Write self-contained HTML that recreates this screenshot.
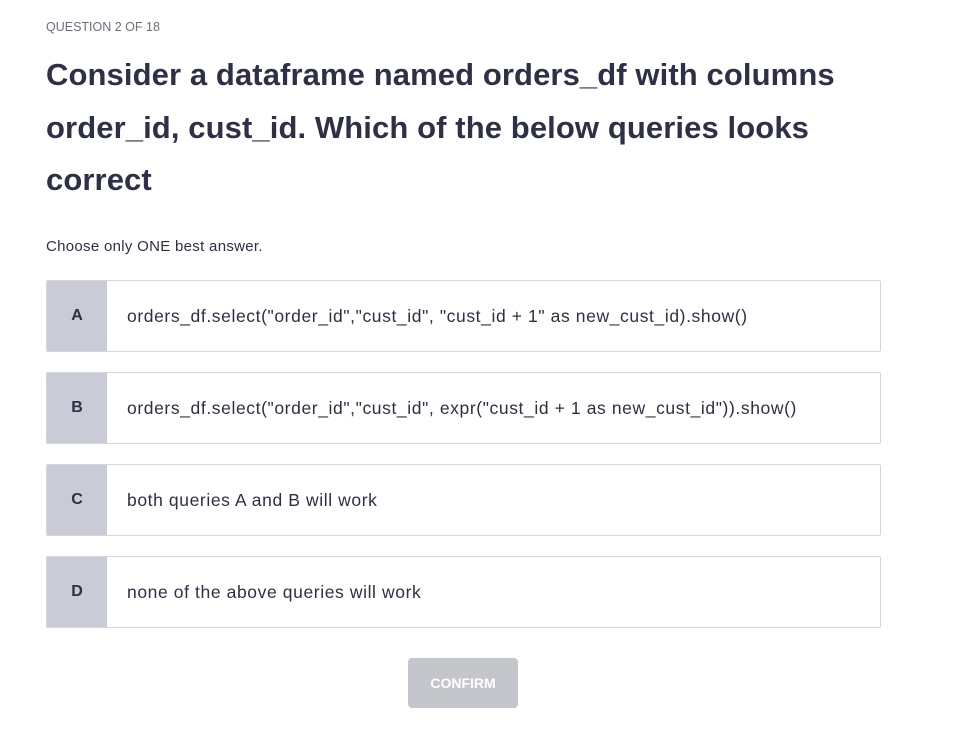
<!DOCTYPE html>
<html><head><meta charset="utf-8"><style>
body{margin:0;background:#fff;font-family:"Liberation Sans",sans-serif;color:#2d2f45;width:978px;height:755px;overflow:hidden;position:relative}
.q{position:absolute;left:46px;top:20px;font-size:12.5px;color:#6a6f7e;letter-spacing:0}
h1{position:absolute;left:46px;top:49px;margin:0;font-size:31px;line-height:52.5px;font-weight:bold;color:#2e3048;width:900px;letter-spacing:0.1px;white-space:nowrap}
.c{position:absolute;left:46px;top:238px;font-size:15px;color:#2d2f45;letter-spacing:0.3px}
.o{position:absolute;left:46px;width:833px;height:70px;border:1px solid #d4d5dc;border-radius:2px;background:#fff;display:flex;align-items:center}
.o .l{width:60px;height:70px;background:#c9cbd6;display:flex;align-items:center;justify-content:center;font-weight:bold;font-size:16px;color:#2d2f45}
.o .t{padding-left:20px;font-size:17.5px;letter-spacing:0.6px;color:#2d2f45}
.b{position:absolute;left:408px;top:658px;width:110px;height:50px;border-radius:4px;background:#c5c6cc;color:#fff;font-weight:bold;font-size:14px;display:flex;align-items:center;justify-content:center}
</style></head><body>
<div class="q">QUESTION 2 OF 18</div>
<h1>Consider a dataframe named orders_df with columns<br>order_id, cust_id. Which of the below queries looks<br>correct</h1>
<div class="c">Choose only ONE best answer.</div>
<div class="o" style="top:280px"><div class="l">A</div><div class="t">orders_df.select("order_id","cust_id", "cust_id + 1" as new_cust_id).show()</div></div>
<div class="o" style="top:372px"><div class="l">B</div><div class="t">orders_df.select("order_id","cust_id", expr("cust_id + 1 as new_cust_id")).show()</div></div>
<div class="o" style="top:464px"><div class="l">C</div><div class="t">both queries A and B will work</div></div>
<div class="o" style="top:556px"><div class="l">D</div><div class="t">none of the above queries will work</div></div>
<div class="b">CONFIRM</div>
</body></html>
